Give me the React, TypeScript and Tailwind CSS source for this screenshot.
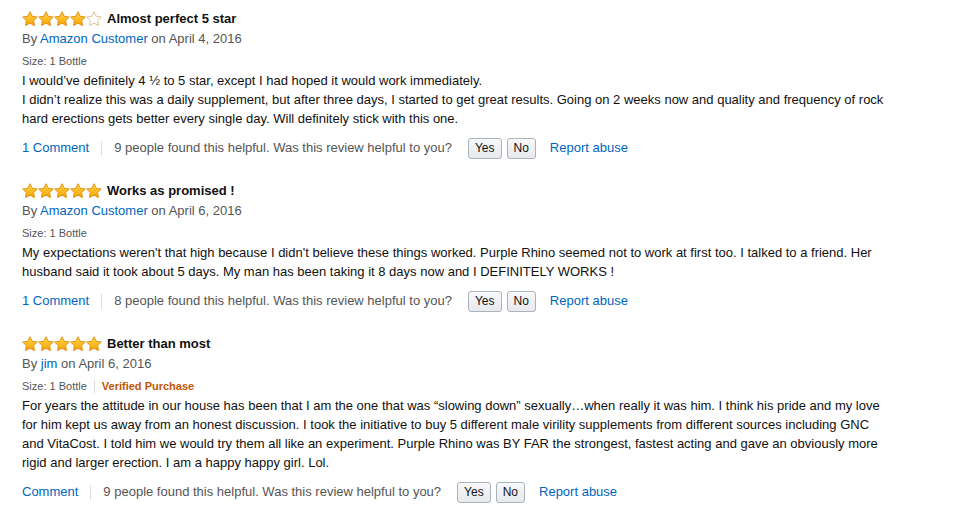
import React from "react";

type Review = {
  stars: number;
  title: string;
  author: string;
  date: string;
  verified?: boolean;
  lines: string[];
  comments: string;
  helpful: number;
};

const reviews: Review[] = [
  {
    stars: 4,
    title: "Almost perfect 5 star",
    author: "Amazon Customer",
    date: "April 4, 2016",
    lines: [
      "I would\u2019ve definitely 4 \u00bd to 5 star, except I had hoped it would work immediately.",
      "I didn\u2019t realize this was a daily supplement, but after three days, I started to get great results. Going on 2 weeks now and quality and frequency of rock",
      "hard erections gets better every single day. Will definitely stick with this one.",
    ],
    comments: "1 Comment",
    helpful: 9,
  },
  {
    stars: 5,
    title: "Works as promised !",
    author: "Amazon Customer",
    date: "April 6, 2016",
    lines: [
      "My expectations weren't that high because I didn't believe these things worked. Purple Rhino seemed not to work at first too. I talked to a friend. Her",
      "husband said it took about 5 days. My man has been taking it 8 days now and I DEFINITELY WORKS !",
    ],
    comments: "1 Comment",
    helpful: 8,
  },
  {
    stars: 5,
    title: "Better than most",
    author: "jim",
    date: "April 6, 2016",
    verified: true,
    lines: [
      "For years the attitude in our house has been that I am the one that was \u201cslowing down\u201d sexually\u2026when really it was him. I think his pride and my love",
      "for him kept us away from an honest discussion. I took the initiative to buy 5 different male virility supplements from different sources including GNC",
      "and VitaCost. I told him we would try them all like an experiment. Purple Rhino was BY FAR the strongest, fastest acting and gave an obviously more",
      "rigid and larger erection. I am a happy happy girl. Lol.",
    ],
    comments: "Comment",
    helpful: 9,
  },
];

const STAR =
  "M8 0.7l2.25 4.6 5.05.7-3.65 3.55.85 5L8 12.2l-4.5 2.35.85-5L.7 6l5.05-.7z";

function Star({ filled }: { filled: boolean }) {
  return (
    <svg width="16" height="16" viewBox="0 0 16 16" className="block">
      <defs>
        <linearGradient id="sg" x1="0" y1="0" x2="0" y2="1">
          <stop offset="0" stopColor="#ffd64f" />
          <stop offset="1" stopColor="#f5a500" />
        </linearGradient>
      </defs>
      <path
        d={STAR}
        fill={filled ? "url(#sg)" : "#ffffff"}
        stroke={filled ? "#de8a0a" : "#d6bb8e"}
        strokeWidth="0.9"
        strokeLinejoin="round"
      />
    </svg>
  );
}

function Stars({ n }: { n: number }) {
  return (
    <div className="flex">
      {[0, 1, 2, 3, 4].map((i) => (
        <Star key={i} filled={i < n} />
      ))}
    </div>
  );
}

function VoteButton({ label }: { label: string }) {
  return (
    <button className="h-[21px] px-[6px] text-[12px] leading-[19px] text-[#111] border border-[#adb1b8] rounded-[3px] bg-gradient-to-b from-[#f7f8fa] to-[#e7e9ec] shadow-[inset_0_1px_0_rgba(255,255,255,0.6)]">
      {label}
    </button>
  );
}

function ReviewItem({ r }: { r: Review }) {
  return (
    <div className="flex flex-col">
      <div className="flex items-center h-[19px]">
        <Stars n={r.stars} />
        <span className="ml-[5px] text-[13px] font-bold text-[#111]">
          {r.title}
        </span>
      </div>
      <div className="h-[19px] leading-[19px] text-[13px] text-[#555] mt-px">
        By <span className="text-[#0066c0]">{r.author}</span> on {r.date}
      </div>
      <div className="flex items-center h-[19px] mt-[4px] text-[11px] text-[#555]">
        <span>Size: 1 Bottle</span>
        {r.verified && (
          <>
            <span className="mx-[7px] h-[13px] w-px bg-[#ddd]" />
            <span className="font-bold text-[#c45500]">Verified Purchase</span>
          </>
        )}
      </div>
      <div className="text-[13px] leading-[19px] text-[#111] whitespace-nowrap">
        {r.lines.map((p, i) => (
          <div key={i}>{p}</div>
        ))}
      </div>
      <div className="flex items-center h-[22px] mt-[9px] text-[13px]">
        <span className="text-[#0066c0]">{r.comments}</span>
        <span className="mx-[12px] h-[15px] w-px bg-[#ddd]" />
        <span className="text-[#555]">
          {r.helpful} people found this helpful. Was this review helpful to
          you?
        </span>
        <div className="flex gap-[5px] ml-[16px]">
          <VoteButton label="Yes" />
          <VoteButton label="No" />
        </div>
        <span className="ml-[14px] text-[#0066c0]">Report abuse</span>
      </div>
    </div>
  );
}

export default function App() {
  return (
    <div
      className="w-[959px] h-[513px] bg-white overflow-hidden pl-[22px] pt-[9px] flex flex-col gap-[22px]"
      style={{ fontFamily: '"Liberation Sans", Arial, sans-serif' }}
    >
      {reviews.map((r, i) => (
        <ReviewItem key={i} r={r} />
      ))}
    </div>
  );
}
